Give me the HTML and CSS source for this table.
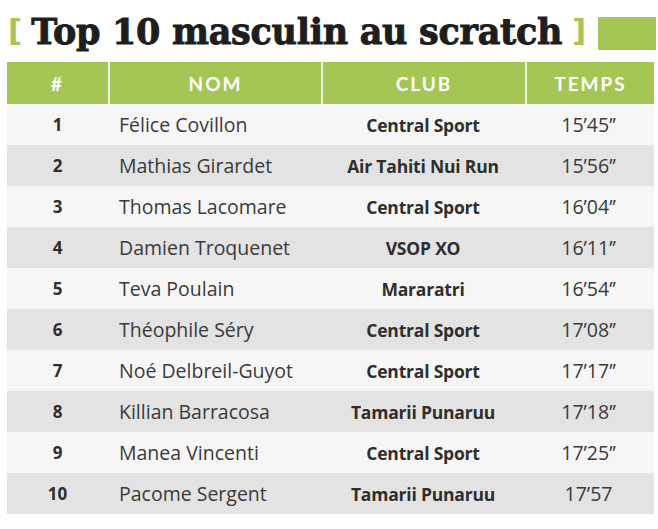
FILE: index.html
```html
<!DOCTYPE html>
<html lang="fr">
<head>
<meta charset="utf-8">
<link rel="stylesheet" href="styles.css">
</head>
<body>
<div class="page">
  <div class="title-row">
    <span class="bracket">[</span>
    <h1 class="title">Top 10 masculin au scratch</h1>
    <span class="bracket">]</span>
    <span class="block"></span>
  </div>
  <div class="table">
    <div class="head">
      <div class="hc c1">#</div>
      <div class="hc c2">NOM</div>
      <div class="hc c3">CLUB</div>
      <div class="hc c4">TEMPS</div>
    </div>
    <div class="row"><div class="rank">1</div><div class="name">Félice Covillon</div><div class="club">Central Sport</div><div class="time">15’45’’</div></div>
    <div class="row"><div class="rank">2</div><div class="name">Mathias Girardet</div><div class="club">Air Tahiti Nui Run</div><div class="time">15’56’’</div></div>
    <div class="row"><div class="rank">3</div><div class="name">Thomas Lacomare</div><div class="club">Central Sport</div><div class="time">16’04’’</div></div>
    <div class="row"><div class="rank">4</div><div class="name">Damien Troquenet</div><div class="club">VSOP XO</div><div class="time">16’11’’</div></div>
    <div class="row"><div class="rank">5</div><div class="name">Teva Poulain</div><div class="club">Mararatri</div><div class="time">16’54’’</div></div>
    <div class="row"><div class="rank">6</div><div class="name">Théophile Séry</div><div class="club">Central Sport</div><div class="time">17’08’’</div></div>
    <div class="row"><div class="rank">7</div><div class="name">Noé Delbreil-Guyot</div><div class="club">Central Sport</div><div class="time">17’17’’</div></div>
    <div class="row"><div class="rank">8</div><div class="name">Killian Barracosa</div><div class="club">Tamarii Punaruu</div><div class="time">17’18’’</div></div>
    <div class="row"><div class="rank">9</div><div class="name">Manea Vincenti</div><div class="club">Central Sport</div><div class="time">17’25’’</div></div>
    <div class="row"><div class="rank">10</div><div class="name">Pacome Sergent</div><div class="club">Tamarii Punaruu</div><div class="time">17’57</div></div>
  </div>
</div>
</body>
</html>
```
FILE: styles.css
```css
html, body {
  margin: 0;
  padding: 0;
  background: #ffffff;
}
.page {
  width: 658px;
  height: 529px;
  padding: 0 0 0 7px;
  box-sizing: border-box;
  font-family: "Open Sans", Lato, sans-serif;
  color: #333333;
}
.title-row {
  display: flex;
  align-items: flex-start;
  height: 62px;
}
.bracket {
  font-family: "DejaVu Sans", sans-serif;
  font-weight: bold;
  font-size: 31px;
  color: #a5c554;
  line-height: 1;
  margin-top: 15px;
  margin-left: 1px;
}
.title {
  margin: 14px 9px 0 9px;
  font-family: "DejaVu Serif", serif;
  font-weight: bold;
  font-size: 35px;
  line-height: 1;
  color: #1e1e1e;
  -webkit-text-stroke: 0.9px #1e1e1e;
  letter-spacing: -0.3px;
}
.block {
  width: 58px;
  height: 33px;
  background: #a5c554;
  margin-left: 12px;
  margin-top: 17px;
}
.table {
  width: 647px;
}
.head, .row {
  display: grid;
  grid-template-columns: 101px 213px 204px 129px;
}
.head {
  height: 42px;
  background: #a5c554;
}
.hc {
  display: flex;
  align-items: center;
  justify-content: center;
  color: #ffffff;
  font-family: Lato, sans-serif;
  font-weight: bold;
  font-size: 19px;
  letter-spacing: 2px;
}
.c2, .c3, .c4 {
  border-left: 2px solid #eef4dd;
}
.row {
  height: 41px;
  align-items: center;
  background: #f6f6f6;
}
.row:nth-child(odd) {
  background: #e3e3e3;
}
.rank {
  text-align: center;
  font-weight: bold;
  font-size: 17px;
  color: #2e2e2e;
}
.name {
  padding-left: 11px;
  font-size: 19.5px;
  color: #3a3a3a;
}
.club {
  text-align: center;
  font-weight: bold;
  font-size: 17.5px;
  color: #2e2e2e;
  letter-spacing: -0.2px;
}
.time {
  text-align: center;
  font-size: 19.5px;
  color: #3a3a3a;
  padding-right: 2px;
}
```
